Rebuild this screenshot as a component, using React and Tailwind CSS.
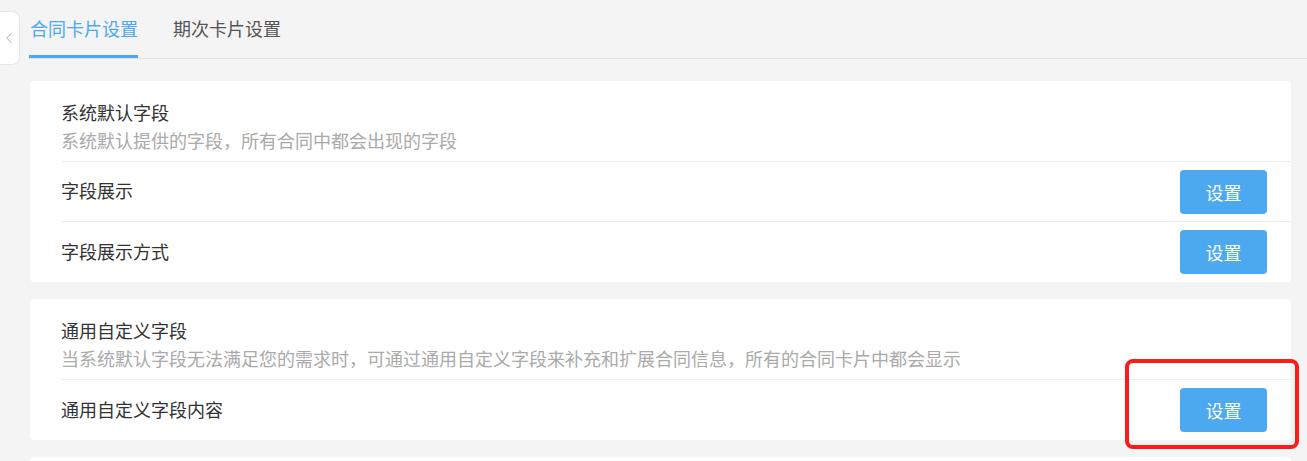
import { ChevronLeft } from 'lucide-react'

const font = { fontFamily: '"Noto Sans CJK SC", "Microsoft YaHei", sans-serif' }

function SetButton() {
  return (
    <button className="w-[87px] h-[44px] rounded-[4px] bg-[#4ca9f0] text-white text-[18px] leading-none">
      设置
    </button>
  )
}

function SettingCard({ title, desc, rows }) {
  return (
    <div className="bg-white rounded-[4px] pl-[31px]">
      <div className="pt-[17px] pb-[7px] border-b border-[#ededed]">
        <div className="text-[18px] leading-7 text-[#333]">{title}</div>
        <div className="text-[18px] leading-7 text-[#aaa]">{desc}</div>
      </div>
      {rows.map((row, i) => (
        <div
          key={row}
          className={`flex items-center justify-between pr-[24px] h-[60px] ${i < rows.length - 1 ? 'border-b border-[#ededed]' : ''}`}
        >
          <span className="text-[18px] text-[#333] -mt-[2px]">{row}</span>
          <SetButton />
        </div>
      ))}
    </div>
  )
}

export default function App() {
  return (
    <div className="relative w-full h-[461px] bg-[#f4f4f4] overflow-hidden" style={font}>
      {/* collapse handle */}
      <div className="absolute left-0 top-[11px] w-[20px] h-[54px] bg-white border border-l-0 border-[#e6e6e6] rounded-r-[8px] flex items-center justify-center">
        <ChevronLeft size={18} strokeWidth={1.2} className="text-[#a0a0a0] -ml-[2px]" />
      </div>

      <div className="pl-[29px]">
        <div className="flex h-[59px] border-b border-[#e2e2e2] gap-[35px]">
          <div className="relative pt-[16px] pl-[1px] text-[18px] leading-6 text-[#4ca9f0] whitespace-nowrap">
            合同卡片设置
            <div className="absolute left-0 right-0 bottom-0 h-[3px] bg-[#4ca9f0]" />
          </div>
          <div className="pt-[16px] text-[18px] leading-6 text-[#555] whitespace-nowrap">期次卡片设置</div>
        </div>

        <div className="pt-[22px] pr-[16px] pl-[1px] flex flex-col gap-[17px]">
          <SettingCard
            title="系统默认字段"
            desc="系统默认提供的字段，所有合同中都会出现的字段"
            rows={['字段展示', '字段展示方式']}
          />
          <SettingCard
            title="通用自定义字段"
            desc="当系统默认字段无法满足您的需求时，可通过通用自定义字段来补充和扩展合同信息，所有的合同卡片中都会显示"
            rows={['通用自定义字段内容']}
          />
          <div className="bg-white rounded-[4px] h-[40px]" />
        </div>
      </div>

      {/* annotation */}
      <div className="absolute left-[1125px] top-[359px] w-[174px] h-[90px] border-[4px] border-[#ff1a1a] rounded-[8px]" />
    </div>
  )
}
